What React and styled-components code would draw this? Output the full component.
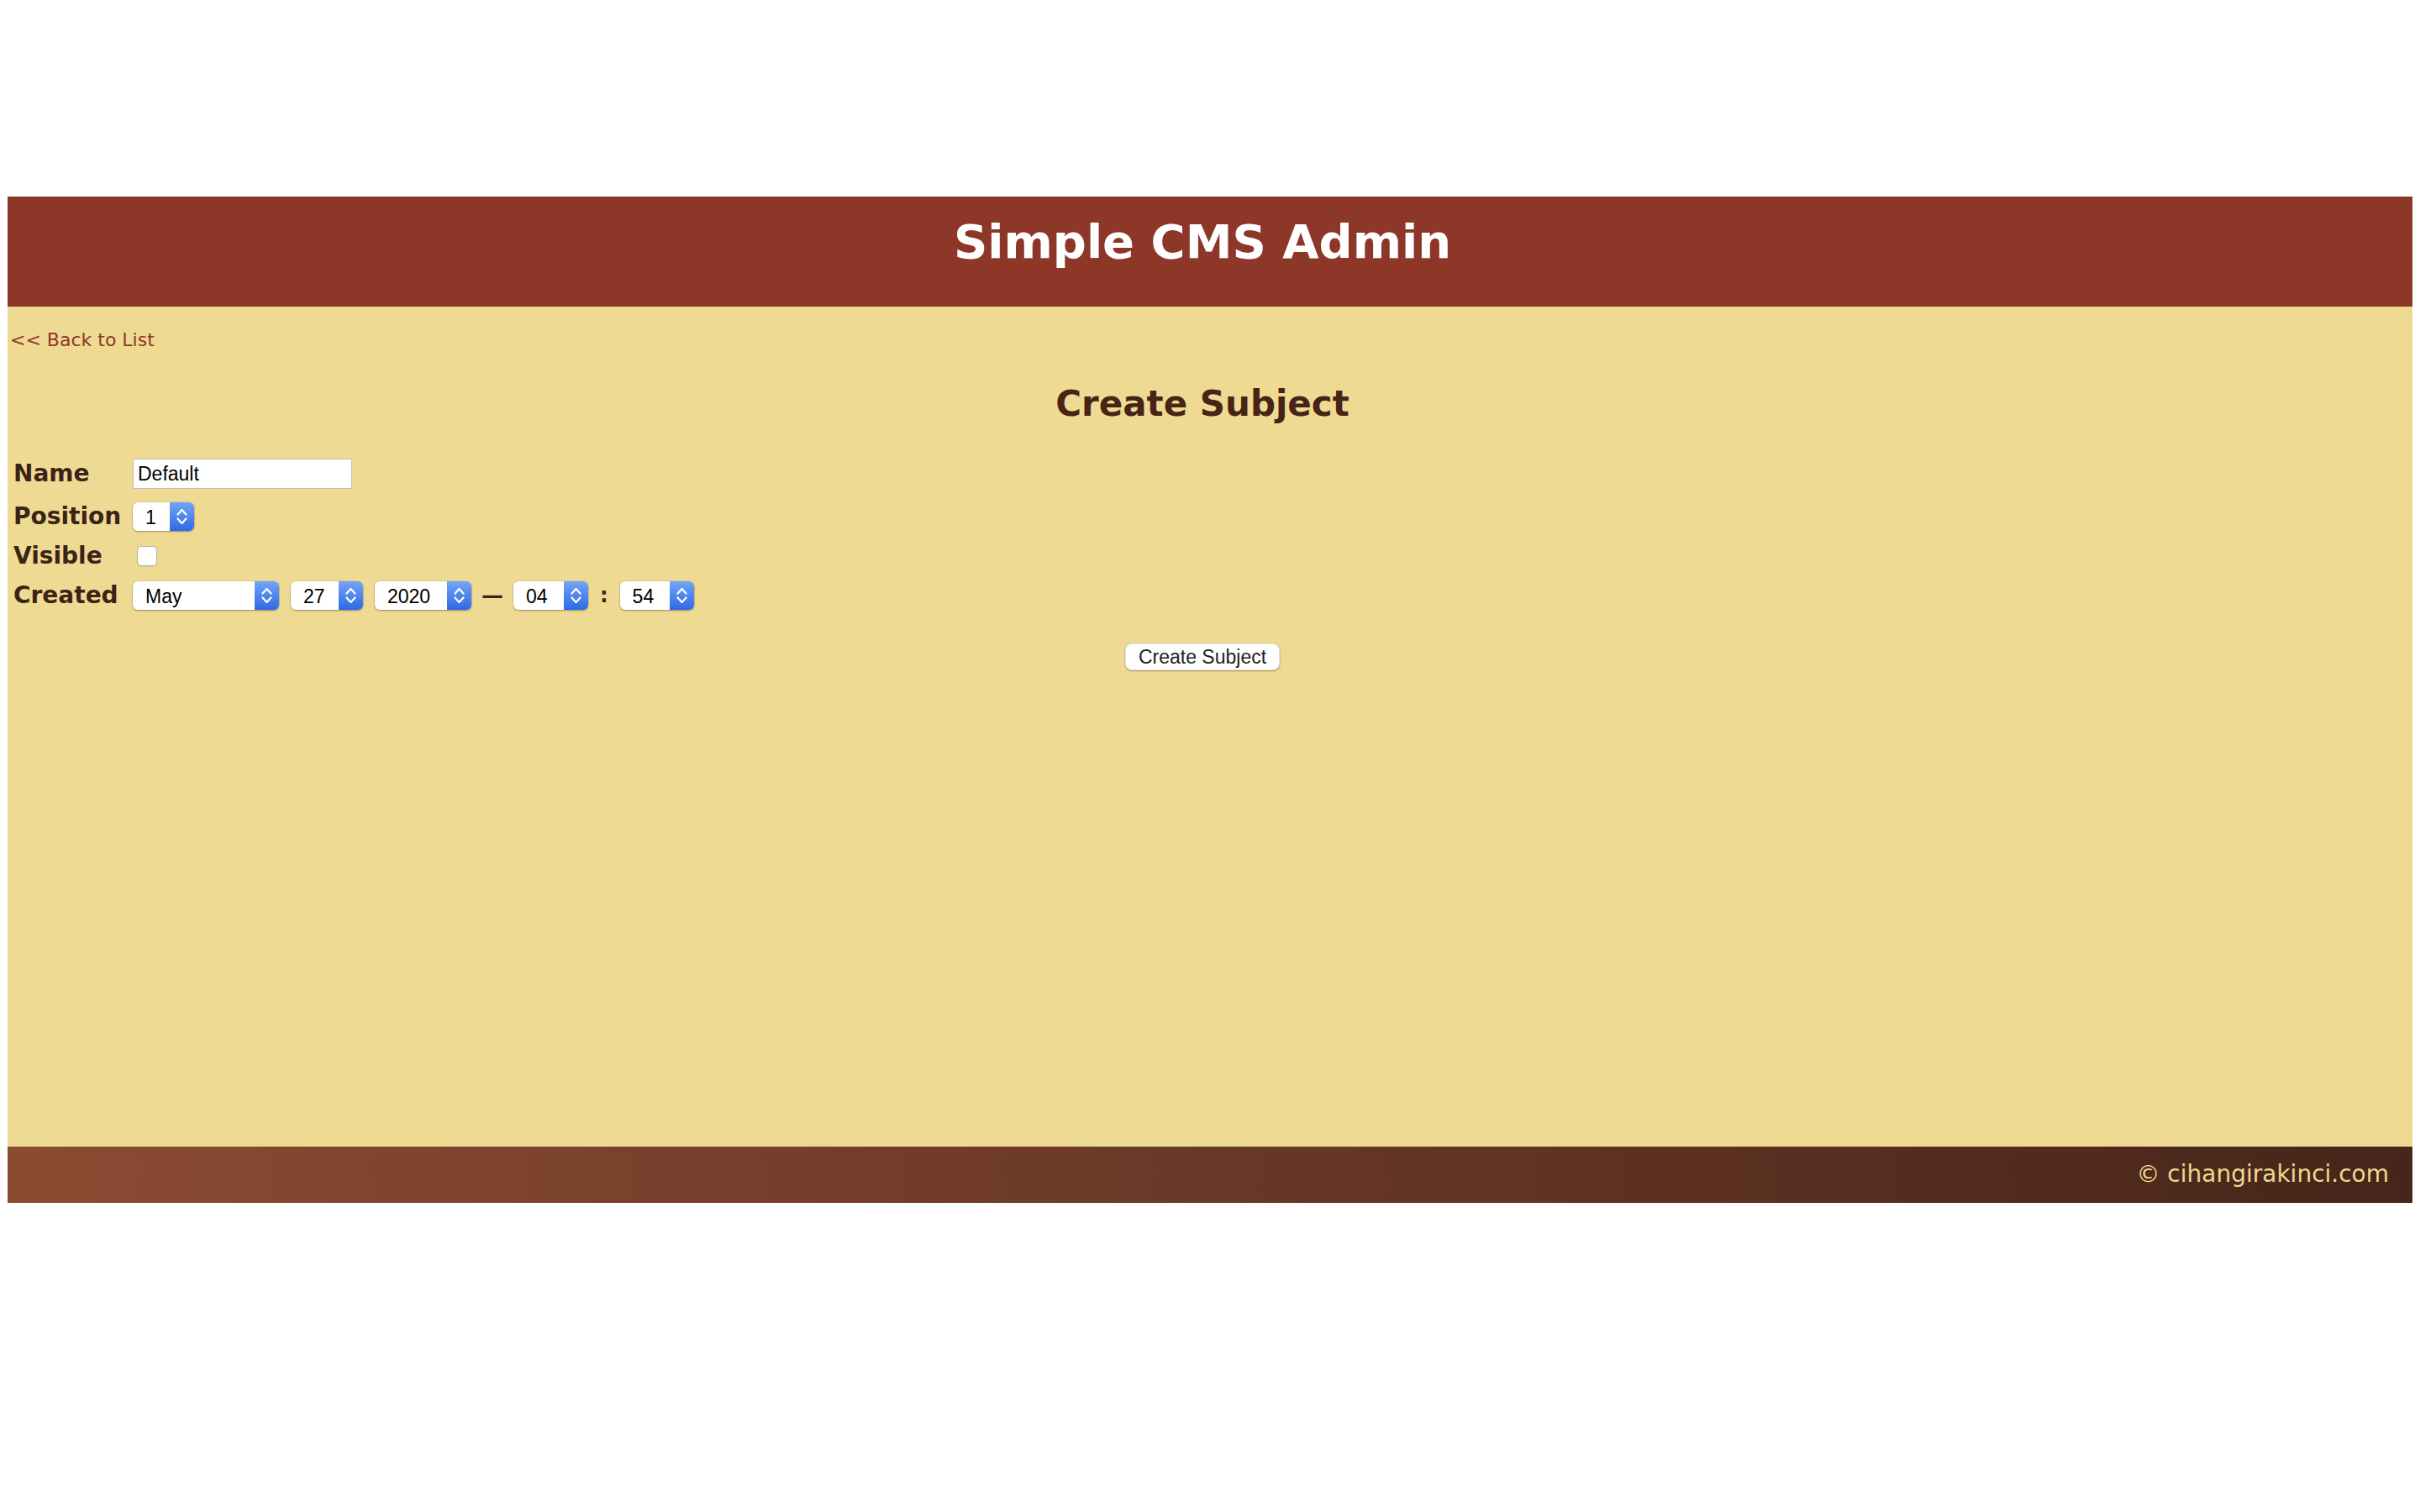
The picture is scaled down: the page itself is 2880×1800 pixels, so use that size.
import React from "react";
import styled, { createGlobalStyle } from "styled-components";

const GlobalStyle = createGlobalStyle`
    html, body {
        margin: 0;
        padding: 0;
        background: #fff;
    }
`

const Page = styled.div`
    padding: 234px 9px 0;
    font-family: "DejaVu Sans", Verdana, sans-serif;
`

const Header = styled.header`
    height: 131px;
    box-sizing: border-box;
    padding: 21px 18px 0 0;
    background: #8d3729;
    text-align: center;
`

const HeaderTitle = styled.h1`
    margin: 0;
    font-size: 56px;
    font-weight: bold;
    color: #fff;
    line-height: normal;
`

const Main = styled.main`
    height: 1000px;
    box-sizing: border-box;
    padding: 27px 18px 0 0;
    background: #eeda93;
`

const BackLink = styled.a`
    display: inline-block;
    margin-left: 3px;
    font-size: 22px;
    color: #8d3729;
    text-decoration: none;
    line-height: normal;
`

const PageTitle = styled.h2`
    margin: 39px 0 0;
    text-align: center;
    font-size: 42px;
    font-weight: bold;
    color: #472416;
    line-height: normal;
`

const FormGrid = styled.form`
    display: grid;
    grid-template-columns: 130px auto;
    grid-template-rows: 36px 34px 28px 34px;
    column-gap: 12px;
    row-gap: 16px;
    align-items: center;
    justify-items: start;
    margin-top: 41px;
    padding-left: 7px;
`

const Label = styled.label`
    font-size: 28px;
    font-weight: bold;
    color: #3b2416;
    line-height: 1;
`

const TextInput = styled.input`
    width: 261px;
    height: 36px;
    box-sizing: border-box;
    padding: 0 5px;
    border: 1px solid #c2beb2;
    box-shadow: inset 0 0 0 1px #fff, inset 0 1px 2px rgba(0, 0, 0, 0.1);
    background: #fff;
    font: 23px "Liberation Sans", Arial, sans-serif;
    color: #000;
    outline: none;
`

const CheckBox = styled.input`
    appearance: none;
    margin: 0 0 0 5px;
    width: 24px;
    height: 24px;
    border: 1px solid #b5b1a6;
    border-radius: 5px;
    background: #fff;
    box-shadow: 0 1px 1px rgba(0, 0, 0, 0.08);
`

const DateRow = styled.div`
    display: flex;
    align-items: center;
    gap: 14px;
`

const Separator = styled.span`
    font-size: ${(p) => p.$size}px;
    font-weight: bold;
    color: #3b2416;
    line-height: 1;
    margin: 0 ${(p) => p.$space}px;
`

const SelectWrap = styled.div`
    display: inline-flex;
    width: ${(p) => p.$w}px;
    height: 34px;
    border-radius: 6px;
    overflow: hidden;
    background: #fff;
    box-shadow: 0 1px 2px rgba(80, 60, 20, 0.45), 0 0 0 0.5px rgba(0, 0, 0, 0.12);
`

const NativeSelect = styled.select`
    appearance: none;
    flex: 1;
    min-width: 0;
    height: 100%;
    border: none;
    background: transparent;
    padding: 1px 0 0 15px;
    font: 23px "Liberation Sans", Arial, sans-serif;
    color: #000;
    outline: none;
`

const Stepper = styled.span`
    width: 29px;
    flex: none;
    display: flex;
    align-items: center;
    justify-content: center;
    background: linear-gradient(#74a4f7, #2d6ae6);
`

const ButtonRow = styled.div`
    display: flex;
    justify-content: center;
    margin-top: 40px;
`

const SubmitButton = styled.button`
    height: 32px;
    padding: 0 15px;
    border: 1px solid rgba(0, 0, 0, 0.12);
    border-radius: 8px;
    background: #fff;
    box-shadow: 0 1px 2px rgba(80, 60, 20, 0.45);
    font: 23px "Liberation Sans", Arial, sans-serif;
    color: #222;
`

const Footer = styled.footer`
    height: 67px;
    box-sizing: border-box;
    padding: 16px 28px 0 0;
    background: linear-gradient(90deg, #8b4b33, #47251a);
    text-align: right;
    font-size: 28px;
    color: #eed98f;
    line-height: normal;
`

const Chevrons = () => (
    <svg width="13" height="22" viewBox="0 0 13 22" fill="none" stroke="#fff" strokeWidth="2.2" strokeLinecap="round" strokeLinejoin="round">
        <path d="M1.5 8.5 L6.5 3 L11.5 8.5" />
        <path d="M1.5 13.5 L6.5 19 L11.5 13.5" />
    </svg>
)

const Select = ({ width, options, value }) => (
    <SelectWrap $w={width}>
        <NativeSelect defaultValue={value}>
            {options.map((o) => (
                <option key={o} value={o}>{o}</option>
            ))}
        </NativeSelect>
        <Stepper><Chevrons /></Stepper>
    </SelectWrap>
)

const pad = (n) => String(n).padStart(2, "0")
const months = ["January", "February", "March", "April", "May", "June", "July", "August", "September", "October", "November", "December"]
const days = Array.from({ length: 31 }, (_, i) => String(i + 1))
const years = Array.from({ length: 11 }, (_, i) => String(2015 + i))
const hours = Array.from({ length: 24 }, (_, i) => pad(i))
const minutes = Array.from({ length: 60 }, (_, i) => pad(i))

const App = () => {
    return (
        <Page>
            <GlobalStyle />
            <Header>
                <HeaderTitle>Simple CMS Admin</HeaderTitle>
            </Header>
            <Main>
                <BackLink href="#">&lt;&lt; Back to List</BackLink>
                <PageTitle>Create Subject</PageTitle>
                <FormGrid onSubmit={(e) => e.preventDefault()}>
                    <Label>Name</Label>
                    <TextInput type="text" defaultValue="Default" />

                    <Label>Position</Label>
                    <Select width={73} options={["1", "2", "3"]} value="1" />

                    <Label>Visible</Label>
                    <CheckBox type="checkbox" />

                    <Label>Created</Label>
                    <DateRow>
                        <Select width={174} options={months} value="May" />
                        <Select width={86} options={days} value="27" />
                        <Select width={115} options={years} value="2020" />
                        <Separator $size={26} $space={-2}>—</Separator>
                        <Select width={89} options={hours} value="04" />
                        <Separator $size={24} $space={0}>:</Separator>
                        <Select width={88} options={minutes} value="54" />
                    </DateRow>
                </FormGrid>
                <ButtonRow>
                    <SubmitButton type="submit">Create Subject</SubmitButton>
                </ButtonRow>
            </Main>
            <Footer>© cihangirakinci.com</Footer>
        </Page>
    )
};
export default App;
